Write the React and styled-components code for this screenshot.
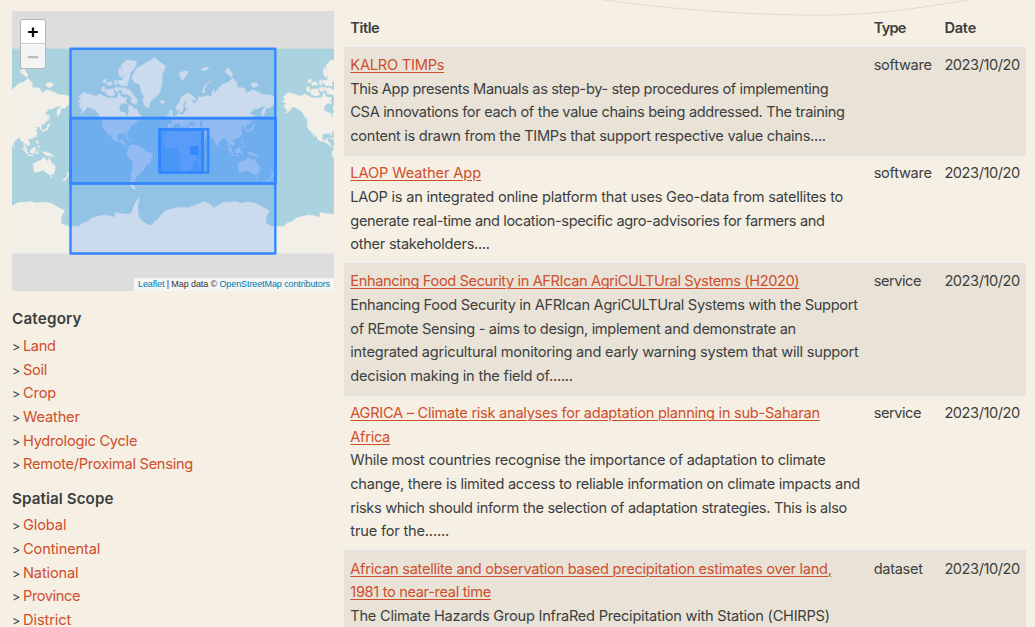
import React, { useLayoutEffect, useRef, useState } from "react";
import styled, { createGlobalStyle } from "styled-components";

const GlobalStyle = createGlobalStyle`
  *, *::before, *::after { box-sizing: border-box; }
  html, body { margin: 0; padding: 0; overflow: hidden; background: #f6efe3; }
  body {
    font-family: Inter, "Liberation Sans", sans-serif;
    font-size: 14.6px;
    line-height: 23.6px;
    color: #3c3e3f;
  }
`;

const Page = styled.main`
  position: relative;
  display: flex;
  align-items: flex-start;
  gap: 10px;
  height: 627px;
  padding: 11px 9px 0 12px;
  overflow: hidden;
`;

const Swoosh = styled.svg`
  position: absolute;
  top: 0;
  left: 580px;
  pointer-events: none;
`;

const Sidebar = styled.aside`
  flex: 0 0 322px;
`;

const MapFrame = styled.div`
  position: relative;
  height: 280px;
  margin-bottom: 6.6px;
  background: #ddd;
  overflow: hidden;
`;

const MapCanvas = styled.svg`
  display: block;
`;

const ZoomControl = styled.div`
  position: absolute;
  top: 8px;
  left: 8px;
  width: 26px;
  border: 1px solid #b4b7b8;
  border-radius: 3px;
  overflow: hidden;
`;

const ZoomButton = styled.button`
  display: block;
  width: 100%;
  height: ${(p) => (p.disabled ? "24px" : "24.4px")};
  padding: 0;
  border: 0;
  border-bottom: ${(p) => (p.disabled ? "0" : "1px solid #ccc")};
  background: ${(p) => (p.disabled ? "#f4f4f4" : "#fff")};
  color: ${(p) => (p.disabled ? "#bbb" : "#000")};
  font: bold ${(p) => (p.disabled ? "19px/21px" : "18px/22px")} "DejaVu Sans Mono", monospace;
  text-align: center;
`;

const Attribution = styled.div`
  position: absolute;
  right: 0;
  bottom: 0;
  height: 13px;
  padding: 0 4px;
  background: rgba(255, 255, 255, 0.7);
  color: #333;
  font: 9px/12.5px "Liberation Sans", sans-serif;
`;

const MapLink = styled.a`
  color: #0078a8;
`;

const FacetTitle = styled.h2`
  margin: 0;
  padding: 9.8px 0 4.2px;
  font-size: 15.2px;
  font-weight: 600;
  line-height: 23.6px;
`;

const FacetList = styled.ul`
  margin: 0;
  padding: 0;
  list-style: none;
`;

const FacetItem = styled.li`
  display: flex;
  height: 23.6px;
  line-height: 23px;
`;

const Marker = styled.span`
  width: 11px;
  font-size: 12.5px;
  line-height: 24px;
`;

const FacetLink = styled.a`
  color: #ce4e2d;
`;

const Results = styled.section`
  flex: 0 0 682px;
`;

const Row = styled.div`
  display: grid;
  grid-template-columns: 523.4px 70.7px 1fr;
  padding: 6.4px 0 6.4px 6.3px;
  border-top: 0.8px solid #dee2e6;
  background: ${(p) => (p.$striped ? "#e9e3d7" : "transparent")};
`;

const HeaderRow = styled(Row)`
  border-top: 0;
  font-weight: 600;
  padding-top: 5.8px;
`;

const TextLine = styled.div`
  height: 23.6px;
  line-height: 22.2px;
`;

const TitleLink = styled.a`
  color: #ce4e2d;
  text-decoration: underline;
  text-decoration-thickness: 1px;
  text-underline-offset: 2px;
`;

const Tracked = styled.span`
  display: inline-block;
  white-space: nowrap;
  text-decoration: inherit;
`;

// Sets one line of text to an exact measure by adjusting its tracking.
function Fit({ width, children }) {
  const ref = useRef(null);
  const [spacing, setSpacing] = useState(0);
  useLayoutEffect(() => {
    const el = ref.current;
    const natural = el.getBoundingClientRect().width;
    setSpacing((width - natural) / el.textContent.length);
  }, [width]);
  return (
    <Tracked ref={ref} style={{ letterSpacing: `${spacing}px` }}>
      {children}
    </Tracked>
  );
}

const WORLD = 204.8;
const ORIGIN_X = 58.5;
const ORIGIN_Y = 37.7;

// Coastlines as flat lon, lat lists.
const COASTS = [
  // North and Central America
  [-168,66,-162,66.5,-166,68.5,-157,71.3,-150,70.5,-141,69.7,-135,69,-128,70.5,-124,69.5,-115,68,-108,68,-102,67.8,-97,68.5,-95,71.5,-91,69,-86,68,-81,68.5,-82,66.5,-87,64.5,-93,62,-94.5,59,-92.5,57,-88,56.5,-82.5,55,-82,52.5,-79.5,51.5,-79,54.5,-76.5,57,-78.5,59,-77.5,62.5,-73,62,-69.5,60.5,-68,58.5,-65,60,-62,57.5,-60,55,-56,52.5,-60,50,-66,50,-70,47,-65,49,-64,46.5,-60,46.5,-65,43.5,-70,43.5,-70,41.5,-74,40.5,-76,37,-76,35,-81,31.5,-80,26,-81.5,25.5,-82.5,29,-85,30,-90,29.5,-94,29.5,-97,27.5,-97.5,22.5,-95.5,18.5,-91,18.5,-90,21,-87,21.5,-88.5,16,-84,15.5,-83.5,11,-81,8.5,-77.5,8.5,-80,7.5,-84,9,-87.5,13,-94,16,-100,17,-105.5,20,-106,23,-109,26,-113,31.5,-114.5,31,-110,23.5,-112,25,-115,29,-117,32.5,-120.5,34.5,-124,39.5,-124,46,-123,49,-128,51,-131,55,-137,58.5,-146,60.5,-151,61,-153,58.5,-159,56,-164,54.7,-158,58,-162,59.5,-165,62,-161,64,-166,65],
  [-73,78,-64,81,-45,82.5,-32,83.5,-22,82.5,-12,81.5,-19,79,-19,76,-22,72,-25,70,-32,68,-39,65.5,-43,60,-49,61.5,-53,66,-51,69,-55,71,-59,75.5,-68,76],
  [-91,81.8,-82,83,-64,82.8,-65,81.5,-75,79.5,-77,77,-80,76,-89,76.5,-87,79],
  [-96,80.5,-92,81.3,-87,79,-91,78,-95,79],
  [-90,73.5,-84,73.8,-80,72.5,-76,72.8,-72,71,-67,69,-62,66.5,-65,63,-72,64.5,-74,65.5,-73,68.5,-80,70,-89,70.5],
  [-117,73,-112,73,-105,73.3,-102,69.7,-109,69,-117,70,-118,72],
  [-125,74.2,-119,74,-120,71.5,-125,72],
  [-117,76,-108,76.5,-106,75,-115,74.8],
  [-123,77,-116,77.5,-118,76,-122,76],
  [-102,77,-98,76.8,-98,75,-103,75.5],
  [-97,77,-89,77,-80,75.8,-80,74.6,-91,74.7,-96,76],
  [-102,73.8,-96,74,-96,72,-99,71.5,-103,73],
  [-95,74,-91,74,-90,72.8,-94,72],
  [-85,66,-80,64,-86,63.7],
  [-59,51,-55.5,50,-53,47,-59,47.7],
  [-84.5,22,-80,23,-74.5,20,-78,20],
  [-74,20,-69,19.5,-72,18],
  [-24,65.5,-18,66.5,-14,65,-19,63.5],
  // South America
  [-77.5,8.5,-72,12,-66,10.5,-62,10.5,-57,6,-51,4,-50,0,-44,-2.5,-37,-4.5,-35,-8,-39,-13,-40,-21,-47,-24.5,-49,-28.5,-54,-34,-58,-34.5,-57,-38,-62,-39,-65,-41,-65.5,-45,-68,-48,-69,-52,-65,-55,-71,-54.5,-75,-51,-75,-46,-73,-41,-73.5,-37,-71,-30,-70,-18,-76,-14,-81,-6,-80,-1,-77,4],
  // Europe and Asia
  [-9,43,-1.5,43.5,-1.5,47,-4.5,48.5,2,51,5,53,8,54,8.5,57,10.5,57.5,10,54.5,14,54,20,54.5,21,57,24,58.5,29,60,22,60,21.5,63,25,65.5,21,65.5,17.5,62,18.5,60,16.5,57,14,55.5,11,59,7,58,5,61,11,64.5,15,68.5,22,70.3,28,71,40,67.5,40,66.2,33,66.7,36,64,40,65,44,66.2,44,68.5,54,68.7,60,69.5,68,68.5,68,71,72.5,73,73,70,76,72,81,73.7,88,75.5,98,76.3,105,77.8,113,76,113,74,125,73.6,130,71,140,72.7,150,71.5,160,69.8,170,69.7,180,69,180,65,177,63,170,60,163,60,162,56,157,51.5,156,57,163,62,156,61.5,150,59.5,142,59,135,54.8,141,53,140,48,135,43.5,130,42,128,39.5,129.5,36,127,34.5,126.5,37,124.5,39.5,121,39,118,39,122,37,119,35,122,31,121,28,117,23.7,110,21,108,21.5,105.5,19,109,13,106,10,104.5,9,103,11,100.5,13.5,99.5,10,103.5,4,103.5,1.5,101,3,98,8,98,14,97,17,94,17,91,22.5,87,21.5,80,15,80,11,77.5,8,73,17,72,21,66.5,25,57,26,56,27,51,28,48,30,51,25,56,25.5,59.8,22.5,55,17.5,45,13,43,15,39,21,35,28,34,31,36,36.5,28,36.8,26.5,40,31,41.2,41,41.5,37,45,39,47,33,45.5,30,46,28,41.5,23,40.5,23,37,20,40,13,45.5,18,40,16,38,12,42,9,44,3,43,0,39,-5,36.3,-9,37.5],
  [-5.5,50,1.5,51.5,0,53,-2,57.5,-5,58.5,-6,56,-3,54,-5,52],
  [-10,52,-6,52.5,-6,55,-9.5,54],
  [11,79.7,22,80.3,27,80,22,78.3,17,76.8,13,78],
  [51.5,71,56,70.7,55.5,73,60,75.4,68,76.8,65,76.7,57,75.2,53,73],
  [48,80.6,58,81.4,64,81,55,80.3],
  [91,80,97,81.2,105,79.2,103,78,98,79],
  [137,75.7,145,76.2,151,75.2,143,73.6,138,74.5],
  [141.5,54,143.5,53,143,46.2,142,48],
  [140,42,145,43.5,141,39,140.5,35.5,135,33.5,130,31,130,34,135,35.5,139,38],
  [120,23,122,25,121,22],
  [120,18.5,122,18.5,124,13,120,14],
  [122,8,126,9.5,126,6],
  [95,5.5,98,4.5,106,-3,105,-6,101,-2],
  [105,-6.5,114,-7,114,-8.5,106,-7.5],
  [109,1.5,117,7,119,5,116,-4,110,-3],
  [119,0,125,1.5,121,0,123,-5,120,-5.5],
  [131,-1,138,-1.5,147,-6,151,-10.5,144,-8,138,-8,133,-4],
  [80,9.5,82,7,80,6],
  // Africa
  [-6,35.7,10,37.3,11,34,20,30.5,22,32.8,32,31,35,28,38,20,43,12,51,12,47,4,40,-3,39,-8,40.5,-15,35,-20,35.5,-24,32,-29,27,-34,19,-34.7,15,-27,12,-17,13.5,-9,9,-2,9,4,4,6.3,-5,5,-9,5,-13,8.5,-17,14.5,-16.5,21,-13,27.5,-10,30],
  [49.5,-12,50,-16,47,-25,44,-24,44.5,-17],
  // Oceania
  [114,-22,122,-18,129,-15,132,-11.5,136.5,-12,136,-15,140,-17.5,142.5,-11,146,-19,153,-25,153,-31,150,-37.5,144,-39,138,-35,131,-31.5,124,-34,116,-35,115.5,-31.5],
  [144.5,-41,148,-41,147,-43.5],
  [173,-34.5,178.5,-37.7,175,-41.5,174,-39],
  [173,-40.7,174,-42,169,-46.7,166.5,-46],
  // Antarctica
  [-180,-85.05,-180,-78.5,-166,-78.7,-160,-77.6,-150,-76.8,-143,-75.4,-132,-74.6,-122,-74,-113,-74.2,-102,-75,-101,-72.5,-94,-73.2,-86,-73.4,-78,-73.6,-72,-72.5,-69,-69,-65,-66,-59,-63.3,-60,-66,-62,-69,-61,-73,-60,-75,-52,-77,-45,-78,-37,-78.2,-32,-76.8,-27,-76,-20,-73.8,-12,-71.5,-4,-71,5,-70,16,-69.7,28,-70,35,-69,43,-68,54,-66,64,-67.5,71,-70,78,-68.8,88,-66.7,99,-66.5,110,-66,120,-67,132,-66.3,145,-67,157,-69.5,170,-71.8,165,-74,163,-77.5,173,-78.5,180,-78.6,180,-85.05],
];

function toPath(coords) {
  const points = [];
  for (let i = 0; i < coords.length; i += 2) {
    const phi = (coords[i + 1] * Math.PI) / 180;
    const x = ((coords[i] + 180) / 360) * WORLD;
    const y = (0.5 - Math.log(Math.tan(Math.PI / 4 + phi / 2)) / (2 * Math.PI)) * WORLD;
    points.push(`${x.toFixed(2)} ${y.toFixed(2)}`);
  }
  return `M${points.join("L")}Z`;
}

const LAND_PATH = COASTS.map(toPath).join("");
// Inland and marginal seas.
const WATER_PATH = [
  [47,47,53,46.5,51,43,54,37,50,37,48,42],
  [33,28,36,24,42,14,43.5,13,39,20,35,28],
].map(toPath).join("");

const EXTENTS = [
  { x: 58.5, y: 37.7, w: 204.8, h: 204.8 },
  { x: 58.8, y: 107.2, w: 204.8, h: 65.2 },
  { x: 58.6, y: 107, w: 204.8, h: 65.6 },
  { x: 147.5, y: 118.2, w: 48.7, h: 43.4 },
  { x: 147.2, y: 118.5, w: 43.4, h: 42.6 },
  { x: 147.8, y: 118.8, w: 42.9, h: 42.3 },
  { x: 147.6, y: 118.6, w: 43, h: 42.5 },
  { x: 179.3, y: 136.3, w: 5.7, h: 6.4 },
  { x: 180.5, y: 137.3, w: 3, h: 3.4 },
];

function WorldMap() {
  return (
    <MapCanvas width="322" height="280" viewBox="0 0 322 280">
      <rect x="0" y={ORIGIN_Y} width="322" height={WORLD} fill="#aad3df" />
      {[-1, 0, 1].map((n) => (
        <g key={n} transform={`translate(${ORIGIN_X + n * WORLD} ${ORIGIN_Y})`}>
          <path d={LAND_PATH} fill="#f2efe9" stroke="#f2efe9" strokeWidth="0.35" strokeLinejoin="round" />
          <path d={WATER_PATH} fill="#aad3df" />
        </g>
      ))}
      {EXTENTS.map((e, i) => (
        <rect key={i} x={e.x} y={e.y} width={e.w} height={e.h} fill="#3388ff" fillOpacity="0.2" stroke="#3388ff" strokeWidth="2.4" strokeLinejoin="round" />
      ))}
    </MapCanvas>
  );
}

const FACETS = [
  {
    title: ["Category", 69.7],
    items: [["Land", 32.5], ["Soil", 24], ["Crop", 33.2], ["Weather", 56.8], ["Hydrologic Cycle", 114.2], ["Remote/Proximal Sensing", 170]],
  },
  {
    title: ["Spatial Scope", 101.5],
    items: [["Global", 43.3], ["Continental", 77.2], ["National", 55.5], ["Province", 57], ["District", 48.2]],
  },
];

const RECORDS = [
  {
    title: [["KALRO TIMPs", 94]],
    text: [
      ["This App presents Manuals as step-by- step procedures of implementing", 478],
      ["CSA innovations for each of the value chains being addressed. The training", 494.3],
      ["content is drawn from the TIMPs that support respective value chains....", 475.5],
    ],
    type: ["software", 58],
  },
  {
    title: [["LAOP Weather App", 130.7]],
    text: [
      ["LAOP is an integrated online platform that uses Geo-data from satellites to", 492.8],
      ["generate real-time and location-specific agro-advisories for farmers and", 474.3],
      ["other stakeholders....", 139.5],
    ],
    type: ["software", 58],
  },
  {
    title: [["Enhancing Food Security in AFRIcan AgriCULTUral Systems (H2020)", 449]],
    text: [
      ["Enhancing Food Security in AFRIcan AgriCULTUral Systems with the Support", 507.3],
      ["of REmote Sensing - aims to design, implement and demonstrate an", 445.5],
      ["integrated agricultural monitoring and early warning system that will support", 508.3],
      ["decision making in the field of......", 222.5],
    ],
    type: ["service", 47.3],
  },
  {
    title: [
      ["AGRICA – Climate risk analyses for adaptation planning in sub-Saharan", 469.5],
      ["Africa", 39.7],
    ],
    text: [
      ["While most countries recognise the importance of adaptation to climate", 475.3],
      ["change, there is limited access to reliable information on climate impacts and", 509.7],
      ["risks which should inform the selection of adaptation strategies. This is also", 496.7],
      ["true for the......", 98.7],
    ],
    type: ["service", 47.3],
  },
  {
    title: [
      ["African satellite and observation based precipitation estimates over land,", 481.3],
      ["1981 to near-real time", 140.6],
    ],
    text: [
      ["The Climate Hazards Group InfraRed Precipitation with Station (CHIRPS)", 479.5],
    ],
    type: ["dataset", 49],
  },
];

export default function App() {
  return (
    <>
      <GlobalStyle />
      <Page>
        <Swoosh width="420" height="20" viewBox="580 0 420 20" fill="none" stroke="#e3dacc" strokeWidth="1">
          <path d="M594 -1.5C665 9 742 14.8 818 15.2C880 15.4 930 6 982 -2" />
        </Swoosh>
        <Sidebar>
          <MapFrame>
            <WorldMap />
            <ZoomControl>
              <ZoomButton aria-label="Zoom in">+</ZoomButton>
              <ZoomButton aria-label="Zoom out" disabled>−</ZoomButton>
            </ZoomControl>
            <Attribution>
              <Fit width={192}>
                <MapLink>Leaflet</MapLink> | Map data © <MapLink>OpenStreetMap contributors</MapLink>
              </Fit>
            </Attribution>
          </MapFrame>
          {FACETS.map((facet) => (
            <React.Fragment key={facet.title[0]}>
              <FacetTitle><Fit width={facet.title[1]}>{facet.title[0]}</Fit></FacetTitle>
              <FacetList>
                {facet.items.map(([label, width]) => (
                  <FacetItem key={label}>
                    <Marker>&gt;</Marker>
                    <FacetLink><Fit width={width}>{label}</Fit></FacetLink>
                  </FacetItem>
                ))}
              </FacetList>
            </React.Fragment>
          ))}
        </Sidebar>
        <Results>
          <HeaderRow>
            <TextLine><Fit width={29}>Title</Fit></TextLine>
            <TextLine><Fit width={32}>Type</Fit></TextLine>
            <TextLine><Fit width={31.7}>Date</Fit></TextLine>
          </HeaderRow>
          {RECORDS.map((record, i) => (
            <Row key={i} $striped={i % 2 === 0}>
              <div>
                {record.title.map(([line, width]) => (
                  <TextLine key={line}>
                    <Fit width={width}><TitleLink>{line}</TitleLink></Fit>
                  </TextLine>
                ))}
                {record.text.map(([line, width]) => (
                  <TextLine key={line}><Fit width={width}>{line}</Fit></TextLine>
                ))}
              </div>
              <TextLine><Fit width={record.type[1]}>{record.type[0]}</Fit></TextLine>
              <TextLine><Fit width={75.5}>2023/10/20</Fit></TextLine>
            </Row>
          ))}
        </Results>
      </Page>
    </>
  );
}
